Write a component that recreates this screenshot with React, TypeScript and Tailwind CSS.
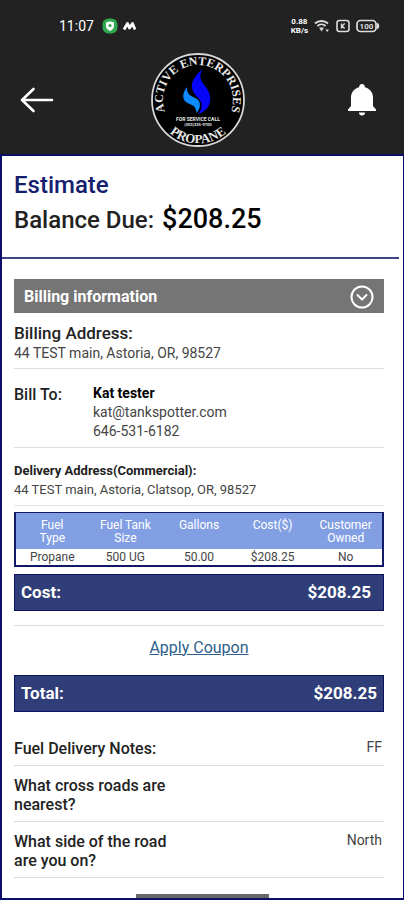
import type { ReactNode } from "react";

const tankRows = [
  { type: "Propane", size: "500 UG", gallons: "50.00", cost: "$208.25", owned: "No" },
];

const notes = [
  { label: "Fuel Delivery Notes:", value: "FF" },
  { label: "What cross roads are nearest?", value: "" },
  { label: "What side of the road are you on?", value: "North" },
];

function StatusBar() {
  return (
    <div className="flex h-13 items-center justify-between pr-6 pl-[59px]">
      <div className="flex items-center gap-2">
        <span className="text-sm">11:07</span>
        <svg className="h-4 w-4" viewBox="0 0 16 16" aria-hidden="true">
          <rect x="0.5" y="0.5" width="15" height="15" rx="6" fill="#2fa84f" />
          <path d="M8 3.2 12 4.6V8c0 2.300-1.600 4-4 5-2.400-1-4-2.700-4-5V4.600Z" fill="#fff" />
          <circle cx="8" cy="7.500" r="1.600" fill="#2fa84f" />
        </svg>
        <svg className="-ml-1 h-3 w-4" viewBox="0 0 16 12" aria-hidden="true">
          <path
            d="M2 9.500 5.500 3.500 7.500 8 10.500 3.500 13 9.500"
            fill="none"
            stroke="#fff"
            strokeWidth="2.800"
            strokeLinejoin="round"
          />
        </svg>
      </div>
      <div className="flex items-center gap-1.5">
        <div className="text-center text-[8px] leading-[9px] font-bold">
          <div>0.88</div>
          <div>KB/s</div>
        </div>
        <svg className="h-3.5 w-4" viewBox="0 0 16 14" fill="none" stroke="#ddd" aria-hidden="true">
          <path d="M1 4.500C4.500 1.300 10.500 1.300 14 4.500" strokeWidth="2" />
          <path d="M3.400 7C5.800 4.800 9.200 4.800 11.600 7" strokeWidth="1.800" />
          <path d="M5 8.500h5L7.500 12.500Z" fill="#ddd" stroke="none" />
          <path d="M11.500 10.500h3.500L13.200 13Z" fill="#ddd" stroke="none" />
        </svg>
        <svg className="h-3.5 w-3.5" viewBox="0 0 14 14" fill="none" stroke="#ddd" aria-hidden="true">
          <rect x="1" y="1.500" width="12" height="11" rx="2.500" strokeWidth="1.600" />
          <path d="M5.500 4.500v5M8.700 4.500 6 7l2.700 2.500" strokeWidth="1.300" />
        </svg>
        <svg className="h-3.5 w-6" viewBox="0 0 24 14" aria-hidden="true">
          <rect x="1" y="1.500" width="19" height="11" rx="3.500" fill="none" stroke="#ddd" strokeWidth="1.700" />
          <path d="M21 3.500c3 1.500 3 5.500 0 7Z" fill="#ddd" />
          <text x="10.500" y="9.800" textAnchor="middle" fontSize="8" fontWeight="700" fill="#ddd">
            100
          </text>
        </svg>
      </div>
    </div>
  );
}

function Logo() {
  return (
    <svg className="h-24 w-24" viewBox="0 0 96 96" role="img" aria-label="Active Enterprises Propane">
      <defs>
        <path id="ring-top" d="M18 66A35 35 0 1 1 78 66" />
        <path id="ring-bottom" d="M9.800 68.600A43.400 43.400 0 0 0 86.200 68.600" />
      </defs>
      <circle cx="48" cy="48" r="47" fill="#000" />
      <circle cx="48" cy="48" r="46" fill="none" stroke="#d8d8d8" strokeWidth="1.800" />
      <g
        fill="#e8e8e8"
        fontSize="13"
        fontWeight="700"
        textAnchor="middle"
        className="font-['Liberation_Serif',serif]"
      >
        <text fontSize="12">
          <textPath href="#ring-top" startOffset="50%">
            ACTIVE ENTERPRISES
          </textPath>
        </text>
        <text>
          <textPath href="#ring-bottom" startOffset="50%">
            PROPANE
          </textPath>
        </text>
      </g>
      <path
        d="M52.500 17C45 24 40 30 42.500 38C45 45 52 47 51.500 54C51.500 57 50 60 48 62C56 60 61.500 53 60 44C59 36 51.500 32 50.500 26C50 23 51 20 52.500 17Z"
        fill="#0505fb"
      />
      <path
        d="M37 35C33 40 31.500 46 36 50C40 53 46 52 46.500 61C51 56 51 50 47 47C42 44 36 43 37 35Z"
        fill="#0b8cff"
      />
      <g fill="#e8e8e8" fontWeight="700" textAnchor="middle">
        <text x="48" y="69" fontSize="5">
          FOR SERVICE CALL
        </text>
        <text x="48" y="74" fontSize="4">
          (503)325-9700
        </text>
      </g>
    </svg>
  );
}

function Header() {
  return (
    <header className="bg-[#222] pb-1.5 text-white">
      <StatusBar />
      <div className="grid h-24 grid-cols-3 items-center pr-7 pl-5">
        <button type="button" aria-label="Back" className="justify-self-start">
          <svg
            className="h-8 w-8.5"
            viewBox="0 0 34 32"
            fill="none"
            stroke="#fff"
            strokeWidth="2.600"
            strokeLinecap="round"
            strokeLinejoin="round"
            aria-hidden="true"
          >
            <path d="M32 16H2M13.500 5 2 16l11.500 11" />
          </svg>
        </button>
        <div className="justify-self-center">
          <Logo />
        </div>
        <button type="button" aria-label="Notifications" className="justify-self-end">
          <svg className="h-8 w-7" viewBox="0 0 28 32" fill="#fff" aria-hidden="true">
            <path d="M14 0a2.800 2.800 0 0 1 2.800 3.200C22 4.500 25 8.500 25 13.500V22l3 3.500V27H0v-1.500L3 22v-8.500C3 8.500 6 4.500 11.200 3.200A2.800 2.800 0 0 1 14 0Z" />
            <path d="M11 28.500h6a3 3 0 0 1-6 0Z" />
          </svg>
        </button>
      </div>
    </header>
  );
}

function AmountBar({ label, children }: { label: string; children: ReactNode }) {
  return (
    <div className="flex h-[37px] items-center justify-between border border-[#0c1260] bg-[#2f3e78] px-1.5 pt-0.5 text-[17px] font-bold text-white">
      <span>{label}</span>
      {children}
    </div>
  );
}

function TankTable() {
  return (
    <table className="mt-1.5 w-full table-fixed border-2 border-t border-[#101a66] text-center text-[#444]">
      <thead className="bg-[#839fe4] align-top text-xs leading-[13px] text-white">
        <tr className="h-9">
          <th className="px-4 pt-1.5 font-normal">Fuel Type</th>
          <th className="px-2 pt-1.5 font-normal">Fuel Tank Size</th>
          <th className="pt-1.5 font-normal">Gallons</th>
          <th className="pt-1.5 font-normal">Cost($)</th>
          <th className="px-2 pt-1.5 font-normal">Customer Owned</th>
        </tr>
      </thead>
      <tbody className="text-xs leading-4">
        {tankRows.map((row) => (
          <tr key={row.type}>
            <td>{row.type}</td>
            <td>{row.size}</td>
            <td>{row.gallons}</td>
            <td>{row.cost}</td>
            <td>{row.owned}</td>
          </tr>
        ))}
      </tbody>
    </table>
  );
}

export default function App() {
  return (
    <div className="flex min-h-screen flex-col bg-white font-['Roboto',sans-serif] text-[#222]">
      <Header />
      <main className="flex grow flex-col border-2 border-r border-[#0b0f6b]">
        <section className="mr-1 border-b-2 border-[#3a4785] px-3 pt-[11px] pb-[21px]">
          <h1 className="text-2xl leading-9 font-medium text-[#14206e]">Estimate</h1>
          <p className="flex items-baseline gap-2 text-2xl leading-8 font-medium">
            Balance Due: <span className="text-[27px] text-black">$208.25</span>
          </p>
        </section>

        <section className="mt-5 mr-[19px] ml-3">
          <button
            type="button"
            className="flex h-[34px] w-full items-center justify-between bg-[#757575] px-2.5 pt-0.5 text-base font-bold text-white"
          >
            Billing information
            <svg
              className="h-6 w-6"
              viewBox="0 0 24 24"
              fill="none"
              stroke="#fff"
              strokeWidth="2"
              strokeLinecap="round"
              strokeLinejoin="round"
              aria-hidden="true"
            >
              <circle cx="12" cy="12" r="10.500" />
              <path d="m7.500 10 4.500 4.500 4.500-4.500" />
            </svg>
          </button>

          <div className="border-b border-[#ddd] pt-[9px] pb-[5px]">
            <h2 className="text-[17px] leading-[22px] font-medium">Billing Address:</h2>
            <p className="text-sm leading-[19px] text-[#444]">44 TEST main, Astoria, OR, 98527</p>
          </div>

          <div className="flex border-b border-[#ddd] pt-[15px] pb-1.5">
            <h2 className="w-[79px] text-base leading-[22px] font-medium">Bill To:</h2>
            <div className="text-sm leading-[19px] text-[#444]">
              <p className="font-bold text-black">Kat tester</p>
              <p>kat@tankspotter.com</p>
              <p>646-531-6182</p>
            </div>
          </div>

          <div className="border-b border-[#e4e4e4] pt-[13px] pb-1.5">
            <h2 className="text-[13px] leading-[19px] font-bold">Delivery Address(Commercial):</h2>
            <p className="text-[13px] leading-[19px] text-[#444]">
              44 TEST main, Astoria, Clatsop, OR, 98527
            </p>
          </div>

          <TankTable />

          <div className="mt-[7px] border-b border-[#ddd] pb-3.5">
            <AmountBar label="Cost:">
              <span className="pr-1.5">$208.25</span>
            </AmountBar>
          </div>

          <div className="pt-2.5 pb-[15px] text-center">
            <a href="#coupon" className="text-base text-[#2d608c] underline">
              Apply Coupon
            </a>
          </div>

          <AmountBar label="Total:">
            <span>$208.25</span>
          </AmountBar>

          <dl className="mt-[17px]">
            {notes.map((note) => (
              <div
                key={note.label}
                className="flex justify-between border-b border-[#ddd] pt-2.5 pr-0.5 pb-[7px]"
              >
                <dt className="w-[170px] text-base leading-[19px] font-medium">{note.label}</dt>
                <dd className="text-sm leading-4 text-[#444]">{note.value}</dd>
              </div>
            ))}
          </dl>
        </section>

        <div className="mx-auto mt-auto h-1 w-1/3 bg-[#686868]" />
      </main>
    </div>
  );
}
